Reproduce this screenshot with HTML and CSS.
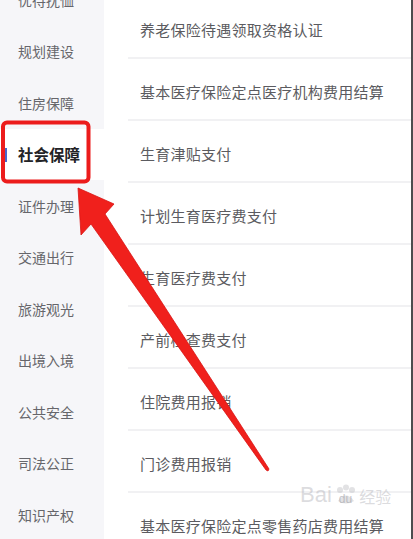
FILE: index.html
```html
<!DOCTYPE html>
<html lang="zh-CN">
<head>
    <meta charset="UTF-8">
    <meta name="viewport" content="width=device-width, initial-scale=1.0">
    <title>社会保障</title>
    <link rel="stylesheet" href="styles.css">
</head>
<body>
    <div class="page">
        <!-- Category sidebar -->
        <ul class="sidebar">
            <li>优待抚恤</li>
            <li>规划建设</li>
            <li>住房保障</li>
            <li class="active">社会保障</li>
            <li>证件办理</li>
            <li>交通出行</li>
            <li>旅游观光</li>
            <li>出境入境</li>
            <li>公共安全</li>
            <li>司法公正</li>
            <li>知识产权</li>
        </ul>

        <!-- Service list -->
        <ul class="services">
            <li>养老保险待遇领取资格认证</li>
            <li>基本医疗保险定点医疗机构费用结算</li>
            <li>生育津贴支付</li>
            <li>计划生育医疗费支付</li>
            <li>生育医疗费支付</li>
            <li>产前检查费支付</li>
            <li>住院费用报销</li>
            <li>门诊费用报销</li>
            <li>基本医疗保险定点零售药店费用结算</li>
        </ul>

        <!-- Watermark -->
        <div class="watermark">
            <span class="wm-bai">Bai</span>
            <svg class="wm-paw" width="24" height="22" viewBox="0 0 24 22">
                <circle cx="6" cy="6" r="3" />
                <circle cx="12" cy="3.5" r="3" />
                <circle cx="18" cy="6" r="3" />
                <path d="M4 17 Q12 6 20 17 Q12 22 4 17 Z" />
            </svg>
            <span class="wm-du">du</span>
            <span class="wm-jy">经验</span>
        </div>

        <!-- Annotation: red box + arrow -->
        <svg class="annotation" width="413" height="539" viewBox="0 0 413 539">
            <rect x="3" y="122.5" width="85.5" height="59" rx="4" ry="4" fill="none" stroke="#ec1c1c" stroke-width="4" />
            <polygon points="78,188 114,204 105,214 269,469 268,471 266,470 91,224 81,235" fill="#f0201c" stroke="#d81414" stroke-width="0.8" stroke-linejoin="round" />
        </svg>
    </div>
</body>
</html>
```

FILE: styles.css
```css
body {
    margin: 0;
    padding: 0;
    background-color: #fff;
    font-family: "Noto Sans CJK SC", "Noto Sans", sans-serif;
}

.page {
    position: relative;
    display: flex;
    width: 413px;
    height: 539px;
    overflow: hidden;
    box-sizing: border-box;
    border-right: 2px solid #4d4d4f;
}

/* Sidebar */
.sidebar {
    list-style: none;
    margin: -26px 0 0 0;
    padding: 0;
    width: 104px;
    flex-shrink: 0;
    background-color: #f6f6f9;
}

.sidebar li {
    position: relative;
    display: flex;
    align-items: center;
    height: 51.5px;
    padding-left: 18px;
    font-size: 14px;
    color: #66666b;
}

.sidebar li.active {
    background-color: #fff;
    color: #232326;
    font-size: 15.5px;
    font-weight: bold;
}

.sidebar li.active::before {
    content: "";
    position: absolute;
    left: 2px;
    top: 19px;
    width: 5px;
    height: 14px;
    background-color: #4a67c9;
}

/* Services */
.services {
    list-style: none;
    margin: -3px 0 0 0;
    padding: 0 0 0 24px;
    flex: 1;
}

.services li {
    display: flex;
    align-items: center;
    height: 62px;
    box-sizing: border-box;
    padding: 4px 0 0 12px;
    border-bottom: 2px solid #f1f1f3;
    font-size: 15px;
    letter-spacing: 0.25px;
    color: #5b5b60;
}

/* Watermark */
.watermark {
    position: absolute;
    left: 300px;
    top: 484px;
    display: flex;
    align-items: flex-end;
    gap: 1px;
    color: rgba(190, 190, 195, 0.55);
    font-family: "Liberation Sans", sans-serif;
}

.wm-bai {
    font-size: 22px;
    line-height: 22px;
}

.wm-paw {
    fill: rgba(190, 190, 195, 0.45);
    margin-left: 1px;
}

.wm-du {
    font-size: 12px;
    margin-left: -20px;
    margin-right: 6px;
    color: rgba(170, 170, 175, 0.7);
}

.wm-jy {
    font-family: "Noto Sans CJK SC", sans-serif;
    font-size: 16px;
    line-height: 20px;
}

/* Annotation overlay */
.annotation {
    position: absolute;
    left: 0;
    top: 0;
    pointer-events: none;
}
```
